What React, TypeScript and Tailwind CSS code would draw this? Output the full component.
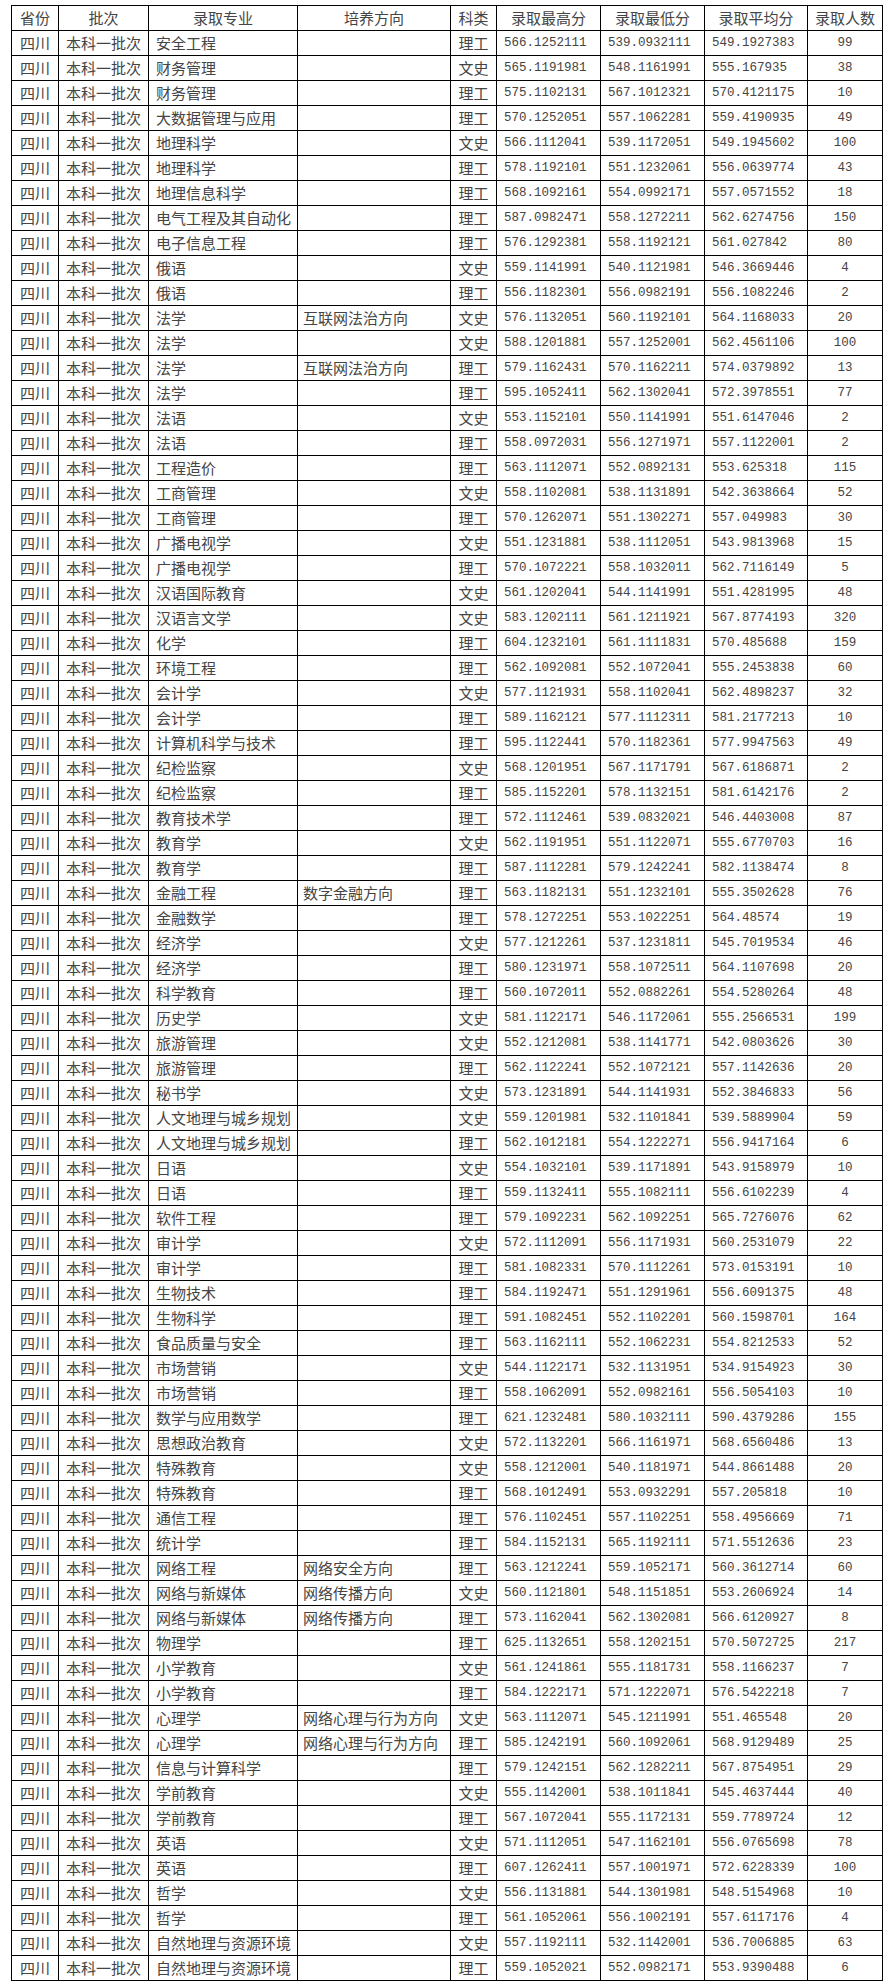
import React from 'react';

type Row = [string, string, string, string, string, string, string];

// 专业 | 培养方向 | 科类 | 最高分 | 最低分 | 平均分 | 人数
const rows: Row[] = [
  ['安全工程', '', '理工', '566.1252111', '539.0932111', '549.1927383', '99'],
  ['财务管理', '', '文史', '565.1191981', '548.1161991', '555.167935', '38'],
  ['财务管理', '', '理工', '575.1102131', '567.1012321', '570.4121175', '10'],
  ['大数据管理与应用', '', '理工', '570.1252051', '557.1062281', '559.4190935', '49'],
  ['地理科学', '', '文史', '566.1112041', '539.1172051', '549.1945602', '100'],
  ['地理科学', '', '理工', '578.1192101', '551.1232061', '556.0639774', '43'],
  ['地理信息科学', '', '理工', '568.1092161', '554.0992171', '557.0571552', '18'],
  ['电气工程及其自动化', '', '理工', '587.0982471', '558.1272211', '562.6274756', '150'],
  ['电子信息工程', '', '理工', '576.1292381', '558.1192121', '561.027842', '80'],
  ['俄语', '', '文史', '559.1141991', '540.1121981', '546.3669446', '4'],
  ['俄语', '', '理工', '556.1182301', '556.0982191', '556.1082246', '2'],
  ['法学', '互联网法治方向', '文史', '576.1132051', '560.1192101', '564.1168033', '20'],
  ['法学', '', '文史', '588.1201881', '557.1252001', '562.4561106', '100'],
  ['法学', '互联网法治方向', '理工', '579.1162431', '570.1162211', '574.0379892', '13'],
  ['法学', '', '理工', '595.1052411', '562.1302041', '572.3978551', '77'],
  ['法语', '', '文史', '553.1152101', '550.1141991', '551.6147046', '2'],
  ['法语', '', '理工', '558.0972031', '556.1271971', '557.1122001', '2'],
  ['工程造价', '', '理工', '563.1112071', '552.0892131', '553.625318', '115'],
  ['工商管理', '', '文史', '558.1102081', '538.1131891', '542.3638664', '52'],
  ['工商管理', '', '理工', '570.1262071', '551.1302271', '557.049983', '30'],
  ['广播电视学', '', '文史', '551.1231881', '538.1112051', '543.9813968', '15'],
  ['广播电视学', '', '理工', '570.1072221', '558.1032011', '562.7116149', '5'],
  ['汉语国际教育', '', '文史', '561.1202041', '544.1141991', '551.4281995', '48'],
  ['汉语言文学', '', '文史', '583.1202111', '561.1211921', '567.8774193', '320'],
  ['化学', '', '理工', '604.1232101', '561.1111831', '570.485688', '159'],
  ['环境工程', '', '理工', '562.1092081', '552.1072041', '555.2453838', '60'],
  ['会计学', '', '文史', '577.1121931', '558.1102041', '562.4898237', '32'],
  ['会计学', '', '理工', '589.1162121', '577.1112311', '581.2177213', '10'],
  ['计算机科学与技术', '', '理工', '595.1122441', '570.1182361', '577.9947563', '49'],
  ['纪检监察', '', '文史', '568.1201951', '567.1171791', '567.6186871', '2'],
  ['纪检监察', '', '理工', '585.1152201', '578.1132151', '581.6142176', '2'],
  ['教育技术学', '', '理工', '572.1112461', '539.0832021', '546.4403008', '87'],
  ['教育学', '', '文史', '562.1191951', '551.1122071', '555.6770703', '16'],
  ['教育学', '', '理工', '587.1112281', '579.1242241', '582.1138474', '8'],
  ['金融工程', '数字金融方向', '理工', '563.1182131', '551.1232101', '555.3502628', '76'],
  ['金融数学', '', '理工', '578.1272251', '553.1022251', '564.48574', '19'],
  ['经济学', '', '文史', '577.1212261', '537.1231811', '545.7019534', '46'],
  ['经济学', '', '理工', '580.1231971', '558.1072511', '564.1107698', '20'],
  ['科学教育', '', '理工', '560.1072011', '552.0882261', '554.5280264', '48'],
  ['历史学', '', '文史', '581.1122171', '546.1172061', '555.2566531', '199'],
  ['旅游管理', '', '文史', '552.1212081', '538.1141771', '542.0803626', '30'],
  ['旅游管理', '', '理工', '562.1122241', '552.1072121', '557.1142636', '20'],
  ['秘书学', '', '文史', '573.1231891', '544.1141931', '552.3846833', '56'],
  ['人文地理与城乡规划', '', '文史', '559.1201981', '532.1101841', '539.5889904', '59'],
  ['人文地理与城乡规划', '', '理工', '562.1012181', '554.1222271', '556.9417164', '6'],
  ['日语', '', '文史', '554.1032101', '539.1171891', '543.9158979', '10'],
  ['日语', '', '理工', '559.1132411', '555.1082111', '556.6102239', '4'],
  ['软件工程', '', '理工', '579.1092231', '562.1092251', '565.7276076', '62'],
  ['审计学', '', '文史', '572.1112091', '556.1171931', '560.2531079', '22'],
  ['审计学', '', '理工', '581.1082331', '570.1112261', '573.0153191', '10'],
  ['生物技术', '', '理工', '584.1192471', '551.1291961', '556.6091375', '48'],
  ['生物科学', '', '理工', '591.1082451', '552.1102201', '560.1598701', '164'],
  ['食品质量与安全', '', '理工', '563.1162111', '552.1062231', '554.8212533', '52'],
  ['市场营销', '', '文史', '544.1122171', '532.1131951', '534.9154923', '30'],
  ['市场营销', '', '理工', '558.1062091', '552.0982161', '556.5054103', '10'],
  ['数学与应用数学', '', '理工', '621.1232481', '580.1032111', '590.4379286', '155'],
  ['思想政治教育', '', '文史', '572.1132201', '566.1161971', '568.6560486', '13'],
  ['特殊教育', '', '文史', '558.1212001', '540.1181971', '544.8661488', '20'],
  ['特殊教育', '', '理工', '568.1012491', '553.0932291', '557.205818', '10'],
  ['通信工程', '', '理工', '576.1102451', '557.1102251', '558.4956669', '71'],
  ['统计学', '', '理工', '584.1152131', '565.1192111', '571.5512636', '23'],
  ['网络工程', '网络安全方向', '理工', '563.1212241', '559.1052171', '560.3612714', '60'],
  ['网络与新媒体', '网络传播方向', '文史', '560.1121801', '548.1151851', '553.2606924', '14'],
  ['网络与新媒体', '网络传播方向', '理工', '573.1162041', '562.1302081', '566.6120927', '8'],
  ['物理学', '', '理工', '625.1132651', '558.1202151', '570.5072725', '217'],
  ['小学教育', '', '文史', '561.1241861', '555.1181731', '558.1166237', '7'],
  ['小学教育', '', '理工', '584.1222171', '571.1222071', '576.5422218', '7'],
  ['心理学', '网络心理与行为方向', '文史', '563.1112071', '545.1211991', '551.465548', '20'],
  ['心理学', '网络心理与行为方向', '理工', '585.1242191', '560.1092061', '568.9129489', '25'],
  ['信息与计算科学', '', '理工', '579.1242151', '562.1282211', '567.8754951', '29'],
  ['学前教育', '', '文史', '555.1142001', '538.1011841', '545.4637444', '40'],
  ['学前教育', '', '理工', '567.1072041', '555.1172131', '559.7789724', '12'],
  ['英语', '', '文史', '571.1112051', '547.1162101', '556.0765698', '78'],
  ['英语', '', '理工', '607.1262411', '557.1001971', '572.6228339', '100'],
  ['哲学', '', '文史', '556.1131881', '544.1301981', '548.5154968', '10'],
  ['哲学', '', '理工', '561.1052061', '556.1002191', '557.6117176', '4'],
  ['自然地理与资源环境', '', '文史', '557.1192111', '532.1142001', '536.7006885', '63'],
  ['自然地理与资源环境', '', '理工', '559.1052021', '552.0982171', '553.9390488', '6'],
];

const headers = ['省份', '批次', '录取专业', '培养方向', '科类', '录取最高分', '录取最低分', '录取平均分', '录取人数'];

const cell = 'border border-black h-[25px] p-0 whitespace-nowrap overflow-hidden';
const cjk = "font-['Noto_Sans_CJK_SC',sans-serif] text-[15px] leading-[24px]";
const mono = "font-['Liberation_Mono',monospace] text-[12.5px] leading-[24px]";

export default function App() {
  return (
    <div className="bg-white min-h-[1984px] pt-[5px] pl-[11px]">
      <table className="table-fixed border-collapse w-[871px] text-[#444]">
        <colgroup>
          <col className="w-[47px]" />
          <col className="w-[90px]" />
          <col className="w-[149px]" />
          <col className="w-[153px]" />
          <col className="w-[46px]" />
          <col className="w-[104px]" />
          <col className="w-[104px]" />
          <col className="w-[103px]" />
          <col className="w-[75px]" />
        </colgroup>
        <thead>
          <tr>
            {headers.map((h) => (
              <th key={h} className={`${cell} ${cjk} font-normal text-center`}>
                {h}
              </th>
            ))}
          </tr>
        </thead>
        <tbody>
          {rows.map((r, i) => (
            <tr key={i}>
              <td className={`${cell} ${cjk} text-center`}>四川</td>
              <td className={`${cell} ${cjk} text-center`}>本科一批次</td>
              <td className={`${cell} ${cjk} pl-[7px] text-left`}>{r[0]}</td>
              <td className={`${cell} ${cjk} pl-[5px] text-left`}>{r[1]}</td>
              <td className={`${cell} ${cjk} text-center`}>{r[2]}</td>
              <td className={`${cell} ${mono} pl-[7px] text-left`}>{r[3]}</td>
              <td className={`${cell} ${mono} pl-[7px] text-left`}>{r[4]}</td>
              <td className={`${cell} ${mono} pl-[7px] text-left`}>{r[5]}</td>
              <td className={`${cell} ${mono} text-center`}>{r[6]}</td>
            </tr>
          ))}
        </tbody>
      </table>
    </div>
  );
}
